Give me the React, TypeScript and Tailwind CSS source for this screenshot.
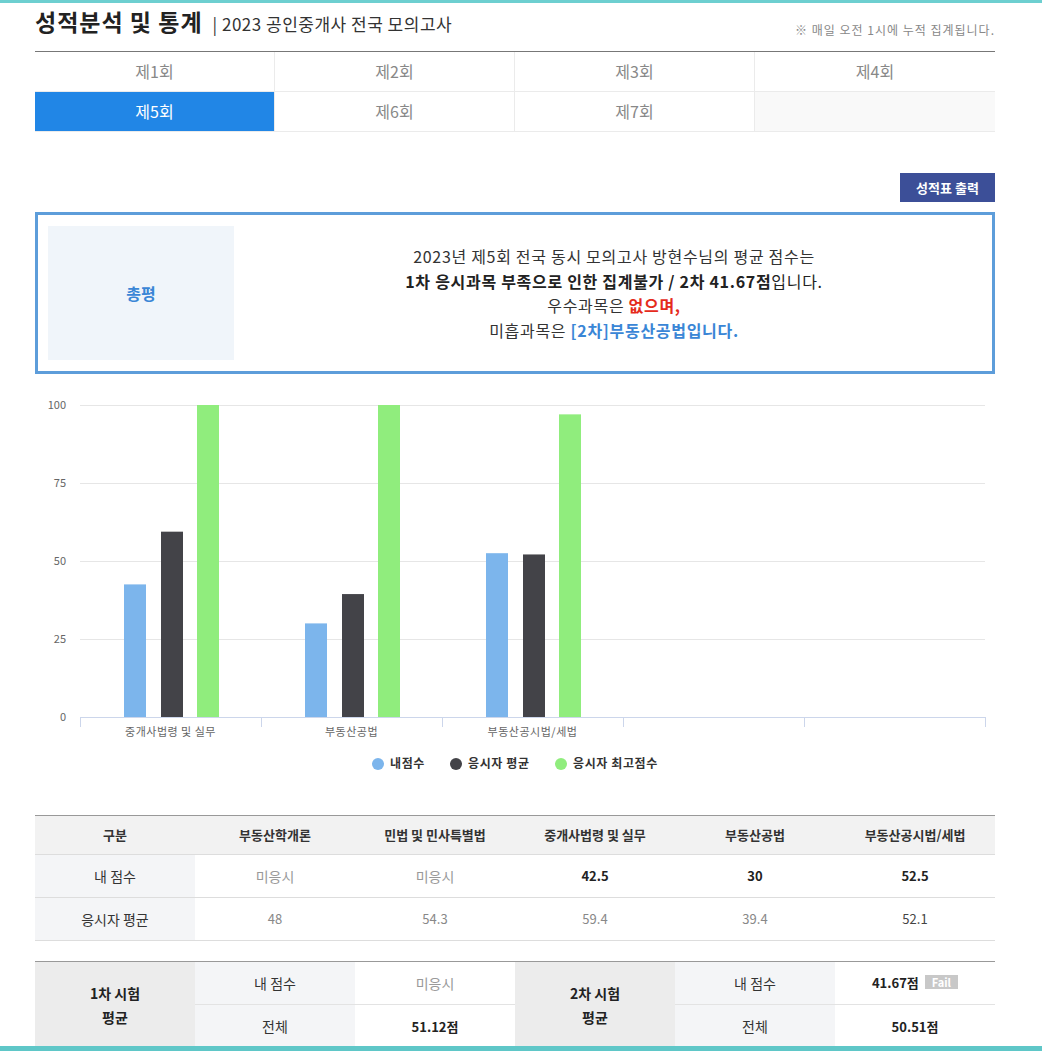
import React from "react";

const font = "font-['Noto_Sans_CJK_KR','Noto_Sans',sans-serif]";

const rounds = ["제1회", "제2회", "제3회", "제4회", "제5회", "제6회", "제7회", ""];

const subjects = [
  { name: "중개사법령 및 실무", mine: 42.5, avg: 59.4, max: 100 },
  { name: "부동산공법", mine: 30, avg: 39.4, max: 100 },
  { name: "부동산공시법/세법", mine: 52.5, avg: 52.1, max: 97 },
];

const columns = [
  { name: "부동산학개론", mine: "미응시", avg: "48" },
  { name: "민법 및 민사특별법", mine: "미응시", avg: "54.3" },
  { name: "중개사법령 및 실무", mine: "42.5", avg: "59.4" },
  { name: "부동산공법", mine: "30", avg: "39.4" },
  { name: "부동산공시법/세법", mine: "52.5", avg: "52.1" },
];

function Chart() {
  const base = 327;
  const scale = 3.12;
  const ticks = [45, 226, 407, 588, 769, 950];
  const grid = [
    { label: "100", y: 15 },
    { label: "75", y: 93 },
    { label: "50", y: 171 },
    { label: "25", y: 249 },
    { label: "0", y: 327 },
  ];
  return (
    <svg width="960" height="400" className="block">
      {grid.map((g) => (
        <g key={g.label}>
          {g.label !== "0" && <line x1="45" x2="950" y1={g.y + 0.5} y2={g.y + 0.5} stroke="#e6e6e6" />}
          <text x="31" y={g.y + 4} textAnchor="end" fontSize="11" fill="#666">
            {g.label}
          </text>
        </g>
      ))}
      {subjects.map((s, i) => {
        const x0 = 45 + 181 * i;
        return (
          <g key={s.name}>
            <rect x={x0 + 44} width="22" y={base - s.mine * scale} height={s.mine * scale} fill="#7cb5ec" />
            <rect x={x0 + 81} width="22" y={base - s.avg * scale} height={s.avg * scale} fill="#434348" />
            <rect x={x0 + 117} width="22" y={base - s.max * scale} height={s.max * scale} fill="#90ed7d" />
            <text x={x0 + 90.5} y="346" textAnchor="middle" fontSize="11" letterSpacing="0.5" fill="#666">
              {s.name}
            </text>
          </g>
        );
      })}
      <line x1="45" x2="950" y1={base + 0.5} y2={base + 0.5} stroke="#ccd6eb" />
      {ticks.map((t) => (
        <line key={t} x1={t + 0.5} x2={t + 0.5} y1={base} y2={base + 10} stroke="#ccd6eb" />
      ))}
      <g fontSize="12" fontWeight="700" fill="#333" letterSpacing="0.6">
        <circle cx="343" cy="374" r="6" fill="#7cb5ec" />
        <text x="355" y="378">내점수</text>
        <circle cx="421" cy="374" r="6" fill="#434348" />
        <text x="433" y="378">응시자 평균</text>
        <circle cx="526" cy="374" r="6" fill="#90ed7d" />
        <text x="538" y="378">응시자 최고점수</text>
      </g>
    </svg>
  );
}

export default function App() {
  return (
    <div className={`min-h-screen border-t-[3px] border-[#6dcfd0] bg-white ${font}`}>
      <div className="ml-[35px] w-[960px] pb-10">
        {/* header */}
        <div className="flex h-[49px] items-start justify-between border-b border-[#777] pt-[4px]">
          <div className="flex items-baseline gap-[10px]">
            <h1 className="text-[23px] font-bold leading-[28px] tracking-[1px] text-[#222]">성적분석 및 통계</h1>
            <span className="text-[17px] leading-[28px] tracking-[0.5px] text-[#333]">| 2023 공인중개사 전국 모의고사</span>
          </div>
          <span className="mt-[15px] text-[12px] leading-[16px] tracking-[1px] text-[#888]">
            ※ 매일 오전 1시에 누적 집계됩니다.
          </span>
        </div>

        {/* round tabs */}
        <div className="grid grid-cols-4">
          {rounds.map((r, i) => {
            const active = r === "제5회";
            const empty = r === "";
            return (
              <div
                key={i}
                className={`flex h-[40px] items-center justify-center border-b border-[#ebebeb] pb-[2px] text-[16px] ${
                  i % 4 !== 3 ? "border-r" : ""
                } ${active ? "bg-[#2186e6] text-white" : empty ? "bg-[#f9f9f9]" : "bg-white text-[#888]"}`}
              >
                {r}
              </div>
            );
          })}
        </div>

        <div className="mt-[41px] flex justify-end">
          <button className="h-[29px] w-[95px] bg-[#3c4f98] text-[13px] font-bold text-white">성적표 출력</button>
        </div>

        {/* summary */}
        <div className="mt-[10px] flex h-[162px] border-[3px] border-[#5d9dda] px-[10px] py-[11px]">
          <div className="flex w-[186px] items-center justify-center bg-[#f0f5fa] text-[16px] font-bold text-[#3a86d6]">
            총평
          </div>
          <div className="flex flex-1 flex-col items-center justify-center pl-[12px] text-[16px] leading-[24.5px] tracking-[0.7px] text-[#333]">
            <p>2023년 제5회 전국 동시 모의고사 방현수님의 평균 점수는</p>
            <p className="font-bold text-[#222]">
              1차 응시과목 부족으로 인한 집계불가 / 2차 41.67점<span className="font-normal">입니다.</span>
            </p>
            <p>
              우수과목은 <span className="font-bold text-[#e52b1c]">없으며,</span>
            </p>
            <p>
              미흡과목은 <span className="font-bold text-[#3a86d6]">[2차]부동산공법입니다.</span>
            </p>
          </div>
        </div>

        {/* chart */}
        <div className="mt-[16px]">
          <Chart />
        </div>

        {/* subject table */}
        <table className="mt-[25px] w-full table-fixed border-collapse text-center">
          <thead>
            <tr className="h-[39px] border-t border-[#999] bg-[#f2f2f2] text-[13px] font-bold text-[#333]">
              <th>구분</th>
              {columns.map((c) => (
                <th key={c.name}>{c.name}</th>
              ))}
            </tr>
          </thead>
          <tbody className="text-[13px]">
            <tr className="h-[43px] border-t border-[#ddd]">
              <td className="bg-[#f4f5f7] text-[14px] text-[#333]">내 점수</td>
              {columns.map((c) => (
                <td key={c.name} className={c.mine === "미응시" ? "text-[14px] text-[#999]" : "font-bold text-[#222]"}>
                  {c.mine}
                </td>
              ))}
            </tr>
            <tr className="h-[43px] border-y border-[#ddd]">
              <td className="bg-[#f4f5f7] text-[14px] text-[#333]">응시자 평균</td>
              {columns.map((c, i) => (
                <td key={c.name} className={i === 4 ? "text-[#444]" : "text-[#888]"}>
                  {c.avg}
                </td>
              ))}
            </tr>
          </tbody>
        </table>

        {/* totals table */}
        <table className="mt-[20px] w-full table-fixed border-collapse text-center text-[14px]">
          <tbody>
            <tr className="h-[43px] border-t border-[#999]">
              <td rowSpan={2} className="bg-[#ececec] font-bold leading-[24px] text-[#222]">
                1차 시험
                <br />
                평균
              </td>
              <td className="border-b border-[#e3e3e3] bg-[#f4f5f7] text-[#333]">내 점수</td>
              <td className="border-b border-[#e3e3e3] text-[#999]">미응시</td>
              <td rowSpan={2} className="bg-[#ececec] font-bold leading-[24px] text-[#222]">
                2차 시험
                <br />
                평균
              </td>
              <td className="border-b border-[#e3e3e3] bg-[#f4f5f7] text-[#333]">내 점수</td>
              <td className="border-b border-[#e3e3e3] text-[13px] font-bold text-[#222]">
                41.67점
                <span className="ml-[6px] inline-block bg-[#c8c8c8] px-[7px] align-[1px] text-[11px] leading-[14px] font-bold text-white">
                  Fail
                </span>
              </td>
            </tr>
            <tr className="h-[43px]">
              <td className="bg-[#f4f5f7] text-[#333]">전체</td>
              <td className="text-[13px] font-bold text-[#222]">51.12점</td>
              <td className="bg-[#f4f5f7] text-[#333]">전체</td>
              <td className="text-[13px] font-bold text-[#222]">50.51점</td>
            </tr>
          </tbody>
        </table>
      </div>
      <div className="fixed inset-x-0 bottom-0 h-[5px] bg-[#5fc7c8]" />
    </div>
  );
}
